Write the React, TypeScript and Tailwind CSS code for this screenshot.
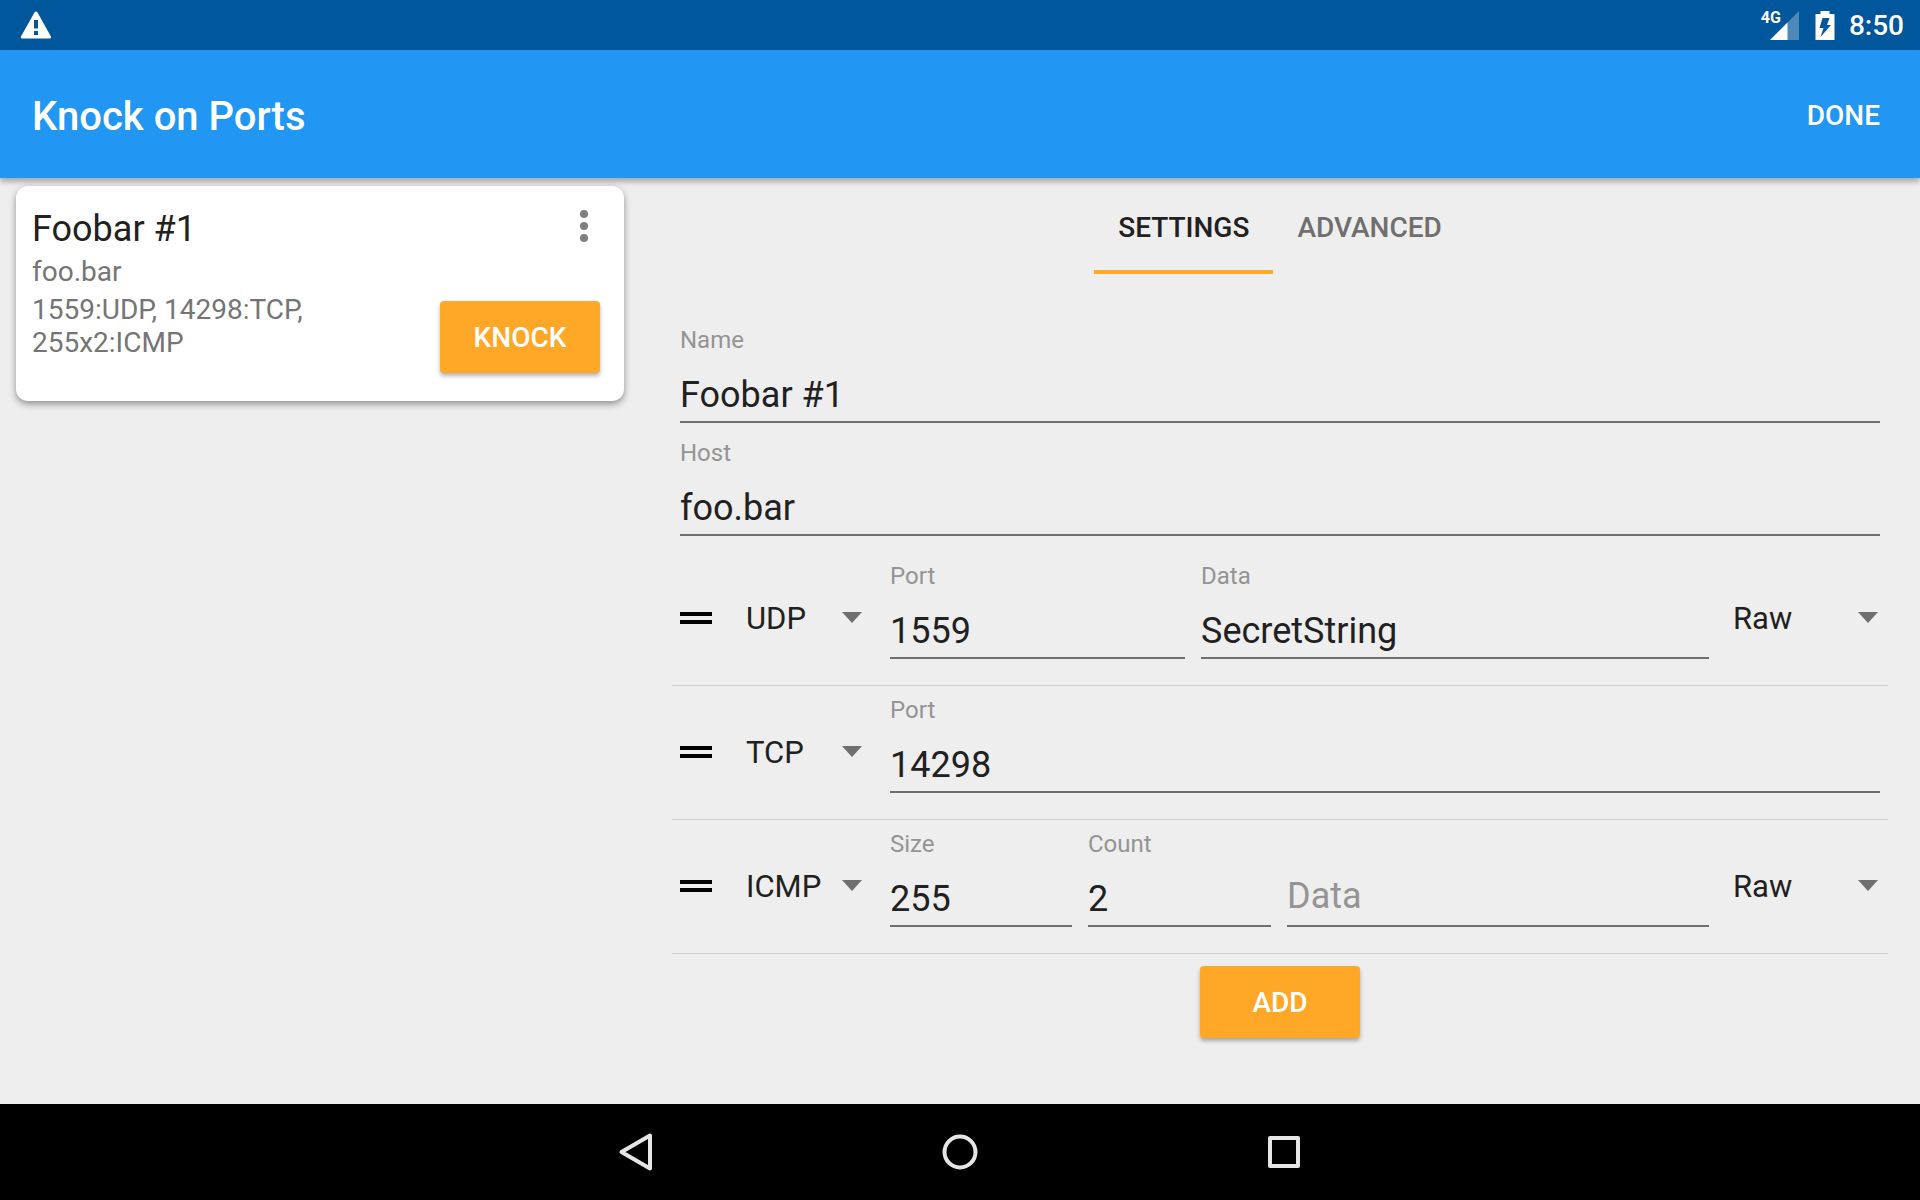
import { useId } from "react";
import type { ReactNode } from "react";

function WarningIcon() {
  return (
    <svg aria-hidden="true" width="32" height="28" viewBox="0 0 32 28" fill="#fff">
      <path
        fillRule="evenodd"
        d="M16 0.5c.6 0 1.100.3 1.400.8l13.500 24.200c.5.9 0 2-1 2H2c-1 0-1.500-1.100-1-2L14.600 1.300c.3-.5.800-.8 1.400-.8zM14 9v8.500h4V9zm0 11v4h4v-4z"
      />
    </svg>
  );
}

function SignalIcon() {
  return (
    <svg aria-hidden="true" width="29" height="29" viewBox="0 0 29 29">
      <path d="M29 0v29H0z" fill="#fff" fillOpacity="0.3" />
      <path d="M17.500 11.500V29H0z" fill="#fff" />
    </svg>
  );
}

function BatteryIcon() {
  return (
    <svg aria-hidden="true" width="20" height="29" viewBox="0 0 20 29" fill="#fff">
      <path
        fillRule="evenodd"
        d="M5.500 0h9v3H19a.5.5 0 0 1 .5.5v25a.5.5 0 0 1-.5.5H1a.5.5 0 0 1-.5-.5v-25A.5.5 0 0 1 1 3H5.500zM7.500 7L4.500 17H8.500L5.500 26 16 14h-4L14.500 7z"
      />
    </svg>
  );
}

function StatusBar() {
  return (
    <div className="flex h-[50px] shrink-0 items-center justify-between bg-[#01579b] pr-4 pl-5 text-white">
      <WarningIcon />
      <div className="flex items-center">
        <div className="relative mr-4 ml-2">
          <span className="absolute -top-[3px] right-[18px] text-[16px] leading-5 font-bold">4G</span>
          <SignalIcon />
        </div>
        <BatteryIcon />
        <span className="ml-[14px] pt-[2px] text-[28px] leading-8 font-medium">8:50</span>
      </div>
    </div>
  );
}

function RaisedButton({ children }: { children: ReactNode }) {
  return (
    <button
      type="button"
      className="h-[72px] w-40 shrink-0 rounded bg-[#ffa726] pt-[2px] text-[28px] leading-8 font-medium text-white shadow-[0_3px_4px_rgba(0,0,0,0.3)]"
    >
      {children}
    </button>
  );
}

function SequenceCard() {
  return (
    <article className="flex justify-between rounded-xl bg-white pt-5 pr-6 pb-7 pl-4 shadow-[0_3px_7px_rgba(0,0,0,0.4)]">
      <div className="pt-[2px] pb-[14px]">
        <h2 className="text-[36px] leading-[42px] text-[#212121]">Foobar #1</h2>
        <div className="mt-[5px] text-[28px] leading-[33px] text-[#757575]">
          <p>foo.bar</p>
          <p className="mt-[5px] max-w-[300px]">1559:UDP, 14298:TCP, 255x2:ICMP</p>
        </div>
      </div>
      <div className="flex flex-col items-end justify-between">
        <button type="button" aria-label="More options" className="flex h-10 w-8 items-center justify-center">
          <svg aria-hidden="true" width="8" height="32" viewBox="0 0 8 32" fill="#808080">
            <circle cx="4" cy="4" r="4" />
            <circle cx="4" cy="16" r="4" />
            <circle cx="4" cy="28" r="4" />
          </svg>
        </button>
        <RaisedButton>KNOCK</RaisedButton>
      </div>
    </article>
  );
}

function Field({ label, value, className = "" }: { label: string; value: string; className?: string }) {
  const id = useId();
  return (
    <div className={"min-w-0 " + className}>
      <label htmlFor={id} className="block text-[24px] leading-7 text-[#949494]">
        {label}
      </label>
      <input
        id={id}
        defaultValue={value}
        className="mt-5 block w-full border-b-2 border-[#6f6f6f] bg-transparent pb-[5px] text-[36px] leading-[42px] text-[#212121] outline-none"
      />
    </div>
  );
}

function Dropdown({
  label,
  value,
  options,
  className,
}: {
  label: string;
  value: string;
  options: string[];
  className: string;
}) {
  return (
    <div className={"relative shrink-0 " + className}>
      <select
        aria-label={label}
        defaultValue={value}
        className="block w-full appearance-none bg-transparent text-[31px] leading-[38px] text-[#212121] outline-none"
      >
        {options.map((option) => (
          <option key={option}>{option}</option>
        ))}
      </select>
      <svg
        aria-hidden="true"
        className="pointer-events-none absolute top-3 right-0"
        width="20"
        height="11"
        viewBox="0 0 20 11"
        fill="#6f6f6f"
      >
        <path d="M0 0h20L10 11z" />
      </svg>
    </div>
  );
}

function StepRow({ protocol, encoding, children }: { protocol: string; encoding?: boolean; children: ReactNode }) {
  return (
    <li className="flex items-center border-b border-[#cfcfcf] px-2 pt-[10px] pb-[26px]">
      <button type="button" aria-label="Reorder" className="mt-[14px] mr-[34px] flex w-8 shrink-0 flex-col gap-1">
        <span className="h-1 bg-black" />
        <span className="h-1 bg-black" />
      </button>
      <Dropdown
        label="Protocol"
        value={protocol}
        options={["UDP", "TCP", "ICMP"]}
        className="mt-4 mr-7 w-[116px]"
      />
      <div className="flex min-w-0 flex-1 items-end gap-4">{children}</div>
      {encoding && (
        <Dropdown
          label="Encoding"
          value="Raw"
          options={["Raw", "Base64", "Hex"]}
          className="mt-4 mr-[2px] ml-6 w-[145px]"
        />
      )}
    </li>
  );
}

function Tab({ active, children }: { active?: boolean; children: ReactNode }) {
  return (
    <button
      type="button"
      role="tab"
      aria-selected={!!active}
      className={
        "h-24 border-b-4 px-6 pt-2 text-[28px] leading-8 font-medium " +
        (active ? "border-[#ffa726] text-[#212121]" : "border-transparent text-[#6f6f6f]")
      }
    >
      {children}
    </button>
  );
}

function SettingsPane() {
  return (
    <section className="min-w-0 flex-[2] px-8">
      <div role="tablist" className="flex justify-center">
        <Tab active>SETTINGS</Tab>
        <Tab>ADVANCED</Tab>
      </div>
      <form>
        <div className="flex flex-col gap-4 px-2 pt-[52px] pb-4">
          <Field label="Name" value="Foobar #1" />
          <Field label="Host" value="foo.bar" />
        </div>
        <ul>
          <StepRow protocol="UDP" encoding>
            <Field label="Port" value="1559" className="flex-[295]" />
            <Field label="Data" value="SecretString" className="flex-[508]" />
          </StepRow>
          <StepRow protocol="TCP">
            <Field label="Port" value="14298" className="flex-1" />
          </StepRow>
          <StepRow protocol="ICMP" encoding>
            <Field label="Size" value="255" className="flex-[182]" />
            <Field label="Count" value="2" className="flex-[183]" />
            <input
              aria-label="Data"
              placeholder="Data"
              className="block min-w-0 flex-[422] border-b-2 border-[#6f6f6f] bg-transparent pb-2 text-[36px] leading-[42px] text-[#212121] outline-none placeholder:text-[#949494]"
            />
          </StepRow>
        </ul>
        <div className="flex justify-center py-3">
          <RaisedButton>ADD</RaisedButton>
        </div>
      </form>
    </section>
  );
}

function NavigationBar() {
  return (
    <nav className="flex h-24 shrink-0 items-center justify-center gap-[276px] bg-black">
      <button type="button" aria-label="Back" className="size-12">
        <svg aria-hidden="true" viewBox="0 0 48 48" fill="none" stroke="#e6e6e6" strokeWidth="4" strokeLinejoin="round">
          <path d="M38 7.500v33L9.500 24z" />
        </svg>
      </button>
      <button type="button" aria-label="Home" className="size-12">
        <svg aria-hidden="true" viewBox="0 0 48 48" fill="none" stroke="#e6e6e6" strokeWidth="4">
          <circle cx="24" cy="24" r="15.500" />
        </svg>
      </button>
      <button type="button" aria-label="Recent apps" className="size-12">
        <svg aria-hidden="true" viewBox="0 0 48 48" fill="none" stroke="#e6e6e6" strokeWidth="4" strokeLinejoin="round">
          <rect x="10" y="10" width="28" height="28" />
        </svg>
      </button>
    </nav>
  );
}

export default function App() {
  return (
    <div className="flex min-h-screen flex-col bg-[#eeeeee] font-['Roboto',sans-serif]">
      <StatusBar />
      <header className="flex h-32 shrink-0 items-center justify-between bg-[#2196f3] px-8 pt-1 text-white shadow-[0_4px_5px_rgba(0,0,0,0.28)]">
        <h1 className="pt-[2px] text-[40px] leading-[48px] font-medium">Knock on Ports</h1>
        <button type="button" className="mr-2 text-[28px] leading-8 font-medium">
          DONE
        </button>
      </header>
      <main className="flex flex-1">
        <aside className="min-w-0 flex-1 px-4 pt-2">
          <SequenceCard />
        </aside>
        <SettingsPane />
      </main>
      <NavigationBar />
    </div>
  );
}
